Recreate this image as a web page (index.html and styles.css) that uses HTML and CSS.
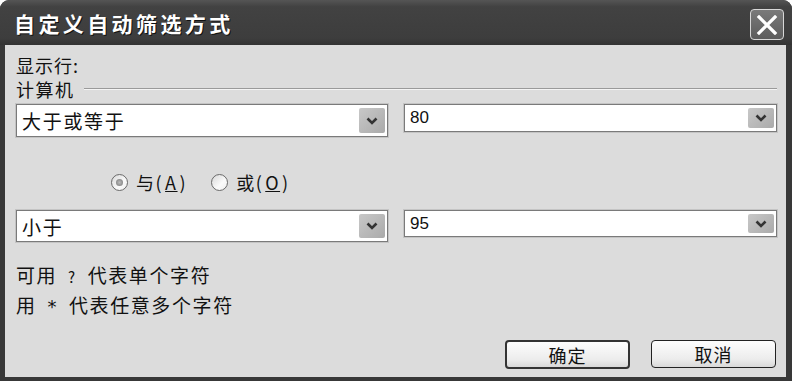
FILE: index.html
```html
<!DOCTYPE html>
<html>
<head>
	<title>自定义自动筛选方式</title>
	<meta charset="utf-8">
	<link rel="stylesheet" href="styles.css">
</head>
<body>
  <div class="window">
    <div class="title-bar">
      <span class="title">自定义自动筛选方式</span>
      <span class="close-btn">
        <svg width="22" height="20" viewBox="0 0 22 20">
          <path d="M3 2 L19 18 M19 2 L3 18" stroke="#fff" stroke-width="3.2" stroke-linecap="square"/>
        </svg>
      </span>
    </div>
    <div class="dialog-body">
      <div class="label">显示行:</div>
      <div class="group-label">
        <span>计算机</span>
        <span class="group-line"></span>
      </div>
      <div class="combo-row">
        <div class="combo combo-tall">
          <span class="combo-text">大于或等于</span>
          <span class="combo-btn"><svg width="12" height="8" viewBox="0 0 12 8"><path d="M1.5 1.5 L6 6 L10.5 1.5" fill="none" stroke="#333" stroke-width="2.6"/></svg></span>
        </div>
        <div class="combo combo-short">
          <span class="combo-text num">80</span>
          <span class="combo-btn"><svg width="12" height="8" viewBox="0 0 12 8"><path d="M1.5 1.5 L6 6 L10.5 1.5" fill="none" stroke="#333" stroke-width="2.6"/></svg></span>
        </div>
      </div>
      <div class="radio-row">
        <label class="radio-item"><span class="radio checked"></span>与(<u>A</u>)</label>
        <label class="radio-item"><span class="radio"></span>或(<u>O</u>)</label>
      </div>
      <div class="combo-row second">
        <div class="combo combo-tall2">
          <span class="combo-text">小于</span>
          <span class="combo-btn"><svg width="12" height="8" viewBox="0 0 12 8"><path d="M1.5 1.5 L6 6 L10.5 1.5" fill="none" stroke="#333" stroke-width="2.6"/></svg></span>
        </div>
        <div class="combo combo-short2">
          <span class="combo-text num">95</span>
          <span class="combo-btn"><svg width="12" height="8" viewBox="0 0 12 8"><path d="M1.5 1.5 L6 6 L10.5 1.5" fill="none" stroke="#333" stroke-width="2.6"/></svg></span>
        </div>
      </div>
      <div class="hints">
        <div>可用 <span class="sym">?</span> 代表单个字符</div>
        <div>用 <span class="sym star">*</span> 代表任意多个字符</div>
      </div>
      <div class="button-row">
        <button class="btn btn-default">确定</button>
        <button class="btn">取消</button>
      </div>
    </div>
  </div>
</body>
</html>
```

FILE: styles.css
```css
html, body{
	margin: 0;
	padding: 0;
	background: #fff;
}
.window{
	width: 792px;
	height: 381px;
	box-sizing: border-box;
	background: #383838;
	border-radius: 9px 9px 0 0;
	padding: 0 6px 4px 5px;
	display: flex;
	flex-direction: column;
	font-family: "Noto Sans CJK SC", "DejaVu Sans", sans-serif;
	color: #111;
}
.title-bar{
	height: 45px;
	flex: none;
	display: flex;
	align-items: center;
	justify-content: space-between;
	background: linear-gradient(#555, #424242 15%, #3d3d3d 85%, #333);
	margin: 0 -6px 0 -5px;
	padding: 0 8px 0 14px;
	border-radius: 9px 9px 0 0;
}
.title{
	color: #fff;
	font-size: 21px;
	font-weight: bold;
	letter-spacing: 3.4px;
	text-shadow: 1px 1px 0 #111;
}
.close-btn{
	width: 34px;
	height: 31px;
	box-sizing: border-box;
	border: 1.5px solid #d8d8d8;
	border-radius: 4px;
	background: linear-gradient(#7a7a7a, #5c5c5c);
	display: flex;
	align-items: center;
	justify-content: center;
	margin-top: 4px;
}
.dialog-body{
	flex: 1;
	background: #dcdcdc;
	padding: 10px 9px 0 11px;
	font-size: 18px;
}
.label{
	height: 20px;
	line-height: 20px;
	letter-spacing: 1px;
}
.group-label{
	display: flex;
	align-items: center;
	height: 20px;
	line-height: 20px;
	margin-top: 4px;
	letter-spacing: 1.5px;
}
.group-line{
	flex: 1;
	height: 1px;
	background: #9a9a9a;
	border-bottom: 1px solid #f4f4f4;
	margin-left: 9px;
}
.combo-row{
	display: flex;
	align-items: flex-start;
	gap: 16px;
	margin-top: 5px;
}
.combo-row.second{
	margin-top: 18px;
}
.combo{
	width: 372px;
	box-sizing: border-box;
	background: #fff;
	border: 1px solid #7a7a7a;
	outline: 1px solid #c4c4c4;
	display: flex;
	align-items: center;
	justify-content: space-between;
	padding: 0 2px 0 5px;
}
.combo-tall{ height: 33px; }
.combo-short{ height: 28px; width: 373px; }
.combo-tall2{ height: 32px; }
.combo-short2{ height: 27px; width: 373px; }
.combo-text{
	font-size: 19px;
	letter-spacing: 1.7px;
}
.combo-text.num{
	font-family: "Liberation Sans", Arial, sans-serif;
	font-size: 17px;
	letter-spacing: 0;
}
.combo-btn{
	width: 26px;
	height: calc(100% - 6px);
	background: linear-gradient(135deg, #c8c8c8, #aaaaaa);
	border-radius: 2px;
	display: flex;
	align-items: center;
	justify-content: center;
}
.radio-row{
	display: flex;
	align-items: center;
	height: 20px;
	margin-top: 35px;
	padding-left: 95px;
	gap: 24px;
}
.radio-item{
	display: flex;
	align-items: center;
	gap: 2px;
	font-size: 18px;
	letter-spacing: 1.5px;
}
.radio{
	width: 17px;
	height: 17px;
	box-sizing: border-box;
	border-radius: 50%;
	border: 1px solid #6a6a6a;
	background: linear-gradient(135deg, #d8d8d8, #fafafa 60%, #eee);
	display: flex;
	align-items: center;
	justify-content: center;
	margin-right: 6px;
}
.radio.checked::after{
	content: "";
	width: 7px;
	height: 7px;
	border-radius: 50%;
	background: radial-gradient(#bbb, #777);
}
.hints{
	margin-top: 19px;
	line-height: 28px;
	font-size: 19px;
	letter-spacing: 1.6px;
}
.sym{
	font-size: 15px;
	margin: 0 5px;
}
.sym.star{
	font-size: 18px;
	font-family: "DejaVu Sans", sans-serif;
}
.button-row{
	display: flex;
	justify-content: flex-end;
	gap: 21px;
	margin-top: 19px;
	padding-right: 1px;
}
.btn{
	width: 125px;
	height: 28px;
	box-sizing: border-box;
	border: 1px solid #222;
	border-radius: 4px;
	background: linear-gradient(#fdfdfd, #ececec 70%, #d8d8d8);
	font-family: "Noto Sans CJK SC", sans-serif;
	font-size: 18px;
	letter-spacing: 1px;
	color: #111;
	padding: 0;
	line-height: 24px;
}
.btn-default{
	height: 29px;
	border: 2px solid #333;
}
```
